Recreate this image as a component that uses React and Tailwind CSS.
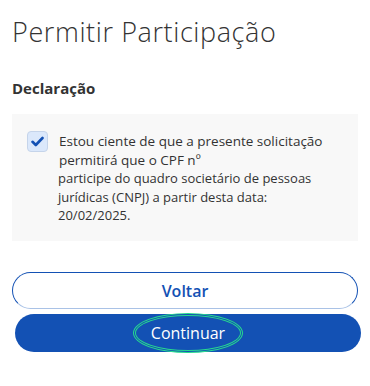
import React from "react";

export default function App() {
  return (
    <div className="w-[370px] h-[386px] bg-white overflow-hidden px-3 font-['Open_Sans',sans-serif] text-[#333333]">
      <h1 className="pt-[15px] text-[27px] leading-[34px] font-light tracking-[0.6px]">Permitir Participação</h1>
      <h2 className="mt-[29px] text-[15px] leading-[20px] font-bold">Declaração</h2>
      <div className="mt-[16px] h-[127px] bg-[#f8f8f8] pl-[15px] pt-[17px] flex items-start gap-[10px]">
        <div className="mt-[0px] w-[21px] h-[21px] shrink-0 rounded-[4px] bg-[#dbe8fb] border border-[#c5d4ea] flex items-center justify-center">
          <svg width="13" height="11" viewBox="0 0 13 11">
            <path d="M1.5 5.8 L4.8 9 L11.5 2" fill="none" stroke="#1351b4" strokeWidth="2.6" strokeLinecap="round" strokeLinejoin="round" />
          </svg>
        </div>
        <div className="pt-[1px]">
          <p className="pl-[1px] text-[13.5px] leading-[18.5px]">Estou ciente de que a presente solicitação<br />permitirá que o CPF nº</p>
          <p className="text-[13px] leading-[18.5px]">participe do quadro societário de pessoas<br />jurídicas (CNPJ) a partir desta data:<br />20/02/2025.</p>
        </div>
      </div>
      <div className="mt-[31px] h-[37px] rounded-full border border-[#1351b4] border-b-[#a9c2e6] flex items-center justify-center text-[#1351b4] text-[16px] font-semibold">
        Voltar
      </div>
      <div className="mt-[5px] ml-[3px] -mr-[3px] h-[38px] rounded-full bg-[#1351b4] flex items-center justify-center">
        <span className="relative text-white text-[16px] font-medium">
          <span className="absolute left-[-18px] right-[-18px] top-[-8px] bottom-[-8px] rounded-[50%] border-[3px] border-double border-[#27d98f]"></span>
          Continuar
        </span>
      </div>
    </div>
  );
}
